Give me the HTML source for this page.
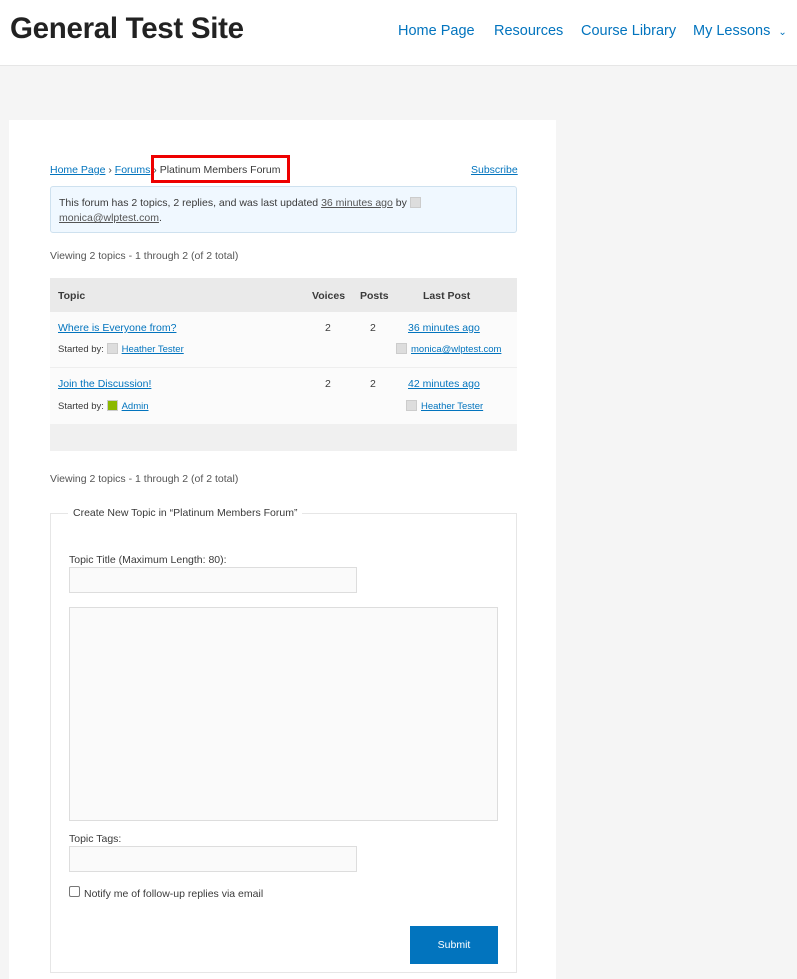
<!DOCTYPE html>
<html><head><style>
*{box-sizing:border-box;margin:0;padding:0}
body{width:797px;height:979px;overflow:hidden;background:#f5f5f5;font-family:"Liberation Sans",sans-serif;color:#3a3a3a;position:relative}
.hdr{position:absolute;left:0;top:0;width:797px;height:66px;background:#fff;border-bottom:1px solid #e6e6e6}
.logo{position:absolute;left:10px;top:12px;font-size:29.5px;font-weight:bold;color:#222;letter-spacing:-0.3px}
.nav{position:absolute;top:23px;font-size:14.5px;color:#0274be}
.panel{position:absolute;left:9px;top:120px;width:547px;height:859px;background:#fff}
a,.a{color:#0274be;text-decoration:underline}
.s{position:absolute;font-size:10.5px}
.av{display:inline-block;width:11px;height:11px;background:#ddd;vertical-align:-2px;margin-right:4px;border:1px solid #ccc}
.inp{position:absolute;background:#fafafa;border:1px solid #ddd}
</style></head><body>
<div class="hdr">
<div class="logo">General Test Site</div>
<div class="nav" style="left:398px">Home Page</div>
<div class="nav" style="left:494px">Resources</div>
<div class="nav" style="left:581px">Course Library</div>
<div class="nav" style="left:693px">My Lessons &nbsp;<span style="font-size:10px">&#8964;</span></div>
</div>
<div class="panel"></div>
<div class="s" style="left:50px;top:164px"><span class="a">Home Page</span> › <span class="a">Forums</span> › Platinum Members Forum</div>
<div style="position:absolute;left:151px;top:155px;width:139px;height:28px;border:3px solid #e00"></div>
<div class="s a" style="left:471px;top:164px">Subscribe</div>
<div style="position:absolute;left:50px;top:186px;width:467px;height:47px;background:#f0f8ff;border:1px solid #cee1ef;border-radius:3px"></div>
<div class="s" style="left:59px;top:196px;line-height:15px;width:440px">This forum has 2 topics, 2 replies, and was last updated <span class="a" style="color:#555">36 minutes ago</span> by <span class="av"></span><br><span class="a" style="color:#555">monica@wlptest.com</span>.</div>
<div class="s" style="left:50px;top:250px;color:#555">Viewing 2 topics - 1 through 2 (of 2 total)</div>
<div style="position:absolute;left:50px;top:278px;width:467px;height:34px;background:#eaeaea"></div>
<div style="position:absolute;left:50px;top:312px;width:467px;height:112px;background:#fbfbfb"></div>
<div style="position:absolute;left:50px;top:367px;width:467px;height:1px;background:#eee"></div>
<div style="position:absolute;left:50px;top:424px;width:467px;height:27px;background:#f0f0f0"></div>
<div class="s" style="left:58px;top:290px;font-weight:bold">Topic</div>
<div class="s" style="left:312px;top:290px;font-weight:bold">Voices</div>
<div class="s" style="left:360px;top:290px;font-weight:bold">Posts</div>
<div class="s" style="left:423px;top:290px;font-weight:bold">Last Post</div>
<div class="s a" style="left:58px;top:322px">Where is Everyone from?</div>
<div class="s" style="left:58px;top:343px;font-size:9.5px">Started by: <span class="av"></span><span class="a">Heather Tester</span></div>
<div class="s" style="left:325px;top:322px">2</div><div class="s" style="left:370px;top:322px">2</div>
<div class="s a" style="left:408px;top:322px">36 minutes ago</div>
<div class="s" style="left:396px;top:343px;font-size:9.5px"><span class="av"></span><span class="a">monica@wlptest.com</span></div>
<div class="s a" style="left:58px;top:378px">Join the Discussion!</div>
<div class="s" style="left:58px;top:400px;font-size:9.5px">Started by: <span class="av" style="background:#8cb800"></span><span class="a">Admin</span></div>
<div class="s" style="left:325px;top:378px">2</div><div class="s" style="left:370px;top:378px">2</div>
<div class="s a" style="left:408px;top:378px">42 minutes ago</div>
<div class="s" style="left:406px;top:400px;font-size:9.5px"><span class="av"></span><span class="a">Heather Tester</span></div>
<div class="s" style="left:50px;top:473px;color:#555">Viewing 2 topics - 1 through 2 (of 2 total)</div>
<div style="position:absolute;left:50px;top:513px;width:467px;height:460px;border:1px solid #e6e6e6"></div>
<div class="s" style="left:68px;top:507px;background:#fff;padding:0 5px">Create New Topic in “Platinum Members Forum”</div>
<div class="s" style="left:69px;top:554px">Topic Title (Maximum Length: 80):</div>
<div class="inp" style="left:69px;top:567px;width:288px;height:26px"></div>
<div class="inp" style="left:69px;top:607px;width:429px;height:214px"></div>
<div class="s" style="left:69px;top:833px">Topic Tags:</div>
<div class="inp" style="left:69px;top:846px;width:288px;height:26px"></div>
<div style="position:absolute;left:69px;top:886px;width:11px;height:11px;border:1px solid #777;border-radius:2px;background:#fff"></div>
<div class="s" style="left:84px;top:888px">Notify me of follow-up replies via email</div>
<div style="position:absolute;left:410px;top:926px;width:88px;height:38px;background:#0274be;color:#fff;font-size:10.5px;text-align:center;line-height:38px">Submit</div>
</body></html>
